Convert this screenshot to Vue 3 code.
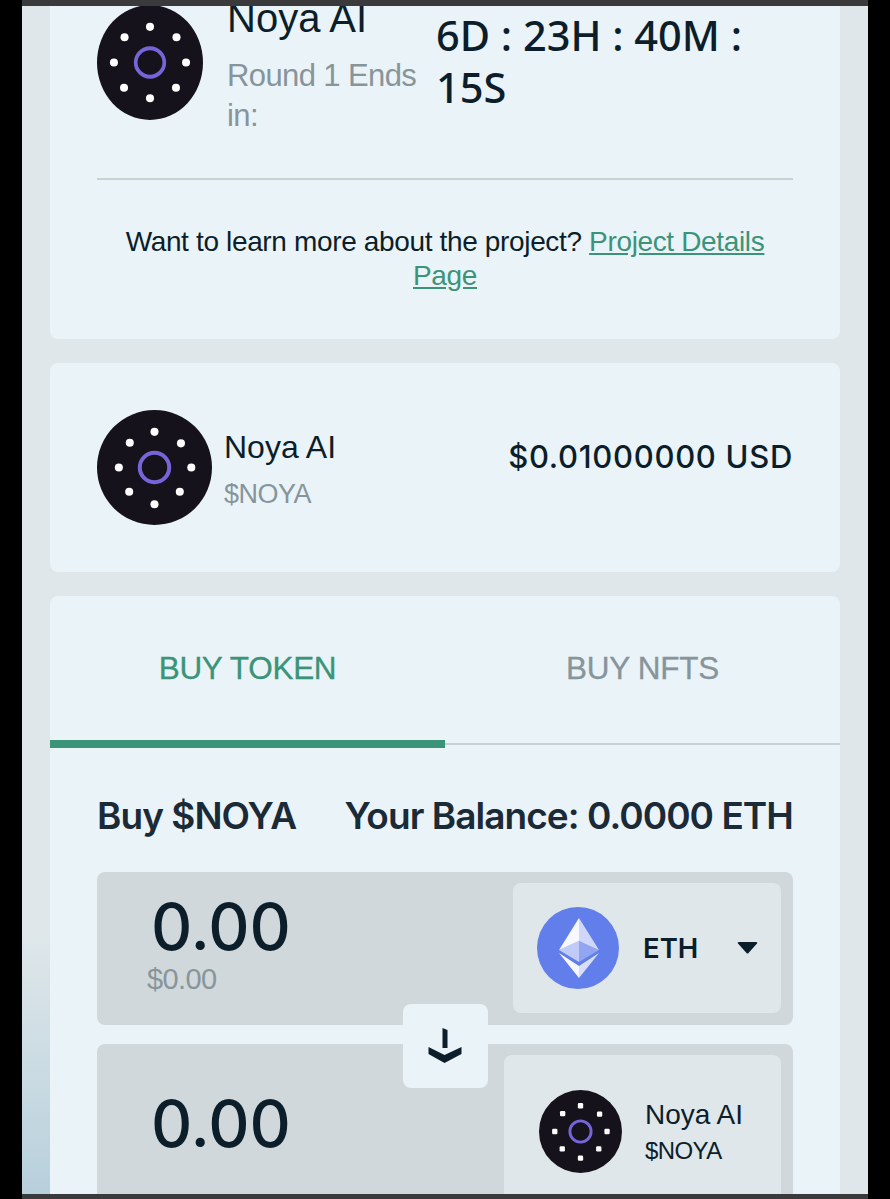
<script setup>
const squeezedDots = [
  [50, 19], [75, 28], [84, 50], [74.5, 72], [50, 81], [25.5, 72], [16, 50], [26, 28],
]
const dots = [
  [50, 19], [73, 29], [82, 50], [72, 71], [50, 82], [28, 71], [19, 50], [28.5, 28.5],
]
</script>

<template>
  <div class="device">
    <div class="bar"></div>
    <main class="page">
      <section class="card intro">
        <div class="head">
          <svg class="logo squeezed" viewBox="0 0 100 100" preserveAspectRatio="none">
            <ellipse cx="50" cy="50" rx="50" ry="50" fill="#16121b" />
            <ellipse v-for="(d, i) in squeezedDots" :key="i" :cx="d[0]" :cy="d[1]" rx="3.800" ry="3.500" fill="#fff" />
            <ellipse cx="50" cy="50" rx="13.500" ry="12.300" fill="none" stroke="#7565d8" stroke-width="3.500" />
          </svg>
          <div class="head-name">
            <div class="title">Noya AI</div>
            <div class="round">Round 1 Ends in:</div>
          </div>
          <div class="timer">6D : 23H : 40M : 15S</div>
        </div>
        <hr class="rule" />
        <p class="learn">Want to learn more about the project? <a class="link">Project Details Page</a></p>
      </section>

      <section class="card summary">
        <div class="token">
          <svg class="logo" viewBox="0 0 100 100">
            <circle cx="50" cy="50" r="50" fill="#16121b" />
            <circle v-for="(d, i) in dots" :key="i" :cx="d[0]" :cy="d[1]" r="3.500" fill="#fff" />
            <circle cx="50" cy="50" r="12.800" fill="none" stroke="#7565d8" stroke-width="3.500" />
          </svg>
          <div>
            <div class="token-name">Noya AI</div>
            <div class="token-sym">$NOYA</div>
          </div>
        </div>
        <div class="price">$0.01000000 USD</div>
      </section>

      <section class="card buy">
        <div class="tabs">
          <div class="tab active">BUY TOKEN</div>
          <div class="tab">BUY NFTS</div>
        </div>
        <div class="buy-body">
          <div class="balance-row">
            <span>Buy $NOYA</span>
            <span>Your Balance: 0.0000 ETH</span>
          </div>
          <div class="inputs">
            <div class="input first">
              <div class="amount">
                <div class="value">0.00</div>
                <div class="usd">$0.00</div>
              </div>
              <div class="select eth">
                <svg class="eth-icon" viewBox="0 0 82 82">
                  <circle cx="41" cy="41" r="41" fill="#627eea" />
                  <path d="M42 11V34L62 43Z" fill="#fff" fill-opacity=".7" />
                  <path d="M42 11L22 43L42 34Z" fill="#fff" fill-opacity=".95" />
                  <path d="M42 34V55L62 43Z" fill="#fff" fill-opacity=".3" />
                  <path d="M42 34L22 43L42 55Z" fill="#fff" fill-opacity=".6" />
                  <path d="M42 59V71L62 46Z" fill="#fff" fill-opacity=".75" />
                  <path d="M42 59L22 46L42 71Z" fill="#fff" fill-opacity=".95" />
                </svg>
                <span class="eth-label">ETH</span>
                <svg class="caret" viewBox="0 0 21 12"><path d="M1 1.500Q0 0 2 0H19Q21 0 20 1.500L11.500 11Q10.500 12 9.500 11Z" fill="#0c1e2a" /></svg>
              </div>
            </div>
            <div class="input second">
              <div class="amount">
                <div class="value">0.00</div>
              </div>
              <div class="select noya">
                <svg class="logo small" viewBox="0 0 100 100">
                  <circle cx="50" cy="50" r="50" fill="#16121b" />
                  <rect v-for="(d, i) in dots" :key="i" :x="d[0] - 3.200" :y="d[1] - 3.200" width="6.400" height="6.400" rx="1.500" fill="#fff" />
                  <circle cx="50" cy="50" r="12.800" fill="none" stroke="#7565d8" stroke-width="3.500" />
                </svg>
                <div>
                  <div class="noya-name">Noya AI</div>
                  <div class="noya-sym">$NOYA</div>
                </div>
              </div>
            </div>
            <div class="swap">
              <svg viewBox="0 0 40 44" width="40" height="44">
                <path d="M16.500 4L21.500 6V24H16.500Z" fill="#0c1e2a" />
                <path d="M2.500 23L18.500 31L35.500 23V30L18.500 39L2.500 30Z" fill="#0c1e2a" />
              </svg>
            </div>
          </div>
        </div>
      </section>
    </main>
    <div class="bar bottom"></div>
  </div>
</template>

<style>
html, body { margin: 0; background: #000; }
</style>

<style scoped>
.device {
  height: 1199px;
  padding: 0 22px;
  box-sizing: border-box;
  display: flex;
  flex-direction: column;
  background: #000;
  font-family: "Liberation Sans", Arial, sans-serif;
  color: #0c1e2a;
  overflow: hidden;
}
.bar { height: 6px; flex: none; background: #3a3a3c; }
.bar.bottom { height: 5px; }
.page {
  flex: 1;
  min-height: 0;
  overflow: hidden;
  padding: 0 28px;
  background: linear-gradient(180deg, #dfe7ea 0%, #dfe7ea 78%, #b8d0dc 100%);
  background-size: 28px 100%;
  background-repeat: no-repeat;
  background-color: #dfe7ea;
}
.card {
  background: #eaf3f8;
  border-radius: 8px;
  margin-bottom: 24px;
}
.intro { margin-top: -48px; padding: 47px 47px 0; height: 381px; box-sizing: border-box; }
.head { display: flex; align-items: flex-start; height: 173px; }
.logo { width: 115px; height: 115px; flex: none; display: block; }
.logo.squeezed { width: 106px; }
.logo.small { width: 83px; height: 83px; }
.head-name { width: 209px; flex: none; margin-left: 24px; margin-top: -11px; }
.title { font-size: 40px; line-height: 48px; }
.round { font-size: 31px; line-height: 40px; color: #87959b; margin-top: 14px; letter-spacing: -0.6px; }
.timer {
  font-family: "Noto Sans", sans-serif;
  font-weight: 500;
  font-size: 41.500px;
  line-height: 52px;
  margin-top: 4px;
  flex: 1;
}
.rule { border: 0; height: 2px; background: #c8d0d2; margin: 0; }
.learn {
  margin: 45px 0 0;
  font-size: 28px;
  line-height: 34px;
  text-align: center;
  letter-spacing: -0.35px;
}
.link { color: #3b9478; text-decoration: underline; }
.summary {
  height: 209px;
  box-sizing: border-box;
  padding: 47px;
  display: flex;
  justify-content: space-between;
}
.token { display: flex; gap: 12px; align-items: flex-start; }
.token-name { font-size: 32px; line-height: 36px; margin-top: 19px; }
.token-sym { font-size: 27px; line-height: 36px; margin-top: 11px; color: #87959b; letter-spacing: -0.5px; }
.price {
  font-family: Inter, sans-serif;
  font-weight: 500;
  font-size: 31px;
  line-height: 40px;
  letter-spacing: 0.7px;
  margin-top: 27px;
}
.buy { margin-bottom: 0; }
.tabs { display: grid; grid-template-columns: 1fr 1fr; grid-template-rows: 149px; align-items: start; height: 149px; }
.tab {
  display: flex;
  align-items: center;
  justify-content: center;
  height: 149px;
  padding-bottom: 3px;
  box-sizing: border-box;
  font-size: 31.500px;
  letter-spacing: -0.3px;
  -webkit-text-stroke: 0.3px currentColor;
  color: #87959b;
  border-bottom: 2px solid #c8d0d2;
}
.tab.active { color: #3b9478; border-bottom: 8px solid #3b9478; height: 152px; padding-bottom: 0; }
.buy-body { padding: 47px 47px 0; }
.balance-row {
  display: flex;
  justify-content: space-between;
  font-family: Inter, sans-serif;
  font-weight: 600;
  font-size: 37px;
  line-height: 48px;
  letter-spacing: -0.95px;
  color: #1a2a36;
}
.inputs { position: relative; margin-top: 32px; display: flex; flex-direction: column; gap: 19px; }
.input {
  background: #d0d8db;
  border-radius: 8px;
  padding: 11px 12px 11px 0;
  display: flex;
  justify-content: space-between;
}
.input.first { height: 153px; box-sizing: border-box; }
.input.second { height: 170px; box-sizing: border-box; }
.amount { padding-left: 50px; }
.value {
  font-family: Inter, sans-serif;
  font-weight: 500;
  font-size: 64px;
  line-height: 62px;
  margin-left: 4px;
  margin-top: 13px;
}
.second .value { margin-top: 38px; }
.usd { font-size: 29px; line-height: 36px; color: #87959b; letter-spacing: -0.6px; margin-top: 3px; }
.select {
  background: #dfe7ea;
  border-radius: 8px;
  display: flex;
  align-items: center;
  box-sizing: border-box;
}
.select.eth { width: 268px; height: 130px; padding-left: 24px; }
.eth-icon { width: 82px; height: 82px; flex: none; }
.eth-label { font-family: Inter, sans-serif; font-weight: 600; font-size: 27.500px; margin-left: 24px; }
.caret { width: 21px; height: 12px; margin-left: 39px; }
.select.noya { width: 277px; height: 160px; padding: 35px 0 0 35px; align-items: flex-start; gap: 23px; }
.noya-name { font-size: 28px; line-height: 36px; margin-top: 7px; }
.noya-sym { font-size: 24px; line-height: 36px; letter-spacing: -0.6px; }
.swap {
  position: absolute;
  left: 306px;
  top: 132px;
  width: 85px;
  height: 84px;
  border-radius: 8px;
  background: #eaf3f8;
  display: flex;
  align-items: center;
  justify-content: center;
}
</style>
